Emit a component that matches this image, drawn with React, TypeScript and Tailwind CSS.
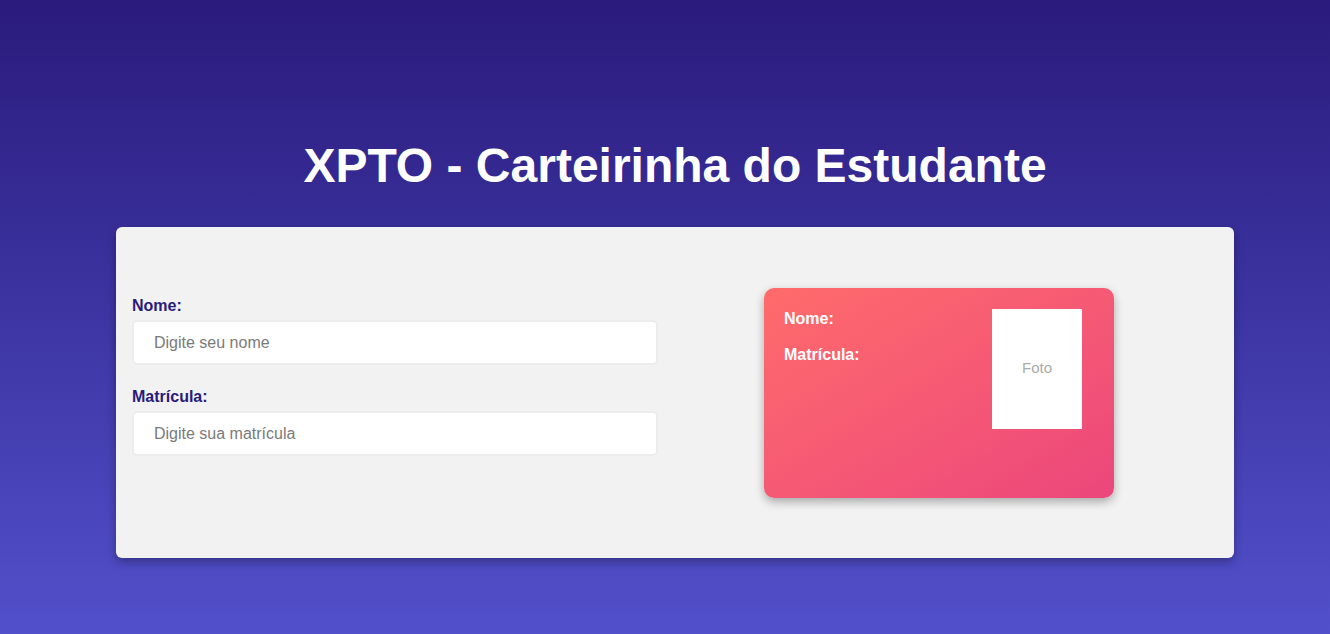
export default function App() {
  return (
    <div
      className="min-h-[634px] w-full bg-linear-to-b from-[#2a1a7c] to-[#5250cb] flex flex-col"
      style={{ fontFamily: '"Liberation Sans", Arial, sans-serif' }}
    >
      <h1 className="pt-[138px] pl-[20px] mb-[34px] text-center text-white font-bold text-[48px] leading-[55px]">
        XPTO - Carteirinha do Estudante
      </h1>
      <div className="ml-[116px] w-[1118px] h-[331px] bg-[#f2f2f2] rounded-[6px] shadow-[0_4px_10px_rgba(0,0,0,0.3)] flex items-center">
        <div className="ml-[16px] w-[526px] mb-[34px] flex flex-col">
          <label className="pt-[2px] text-[16px] leading-[18px] font-bold text-[#2a1a7a] mb-[5px]">Nome:</label>
          <input
            className="h-[45px] w-full bg-white border-2 border-[#ececec] rounded-[5px] pl-[20px] text-[16px] text-[#333] placeholder:text-[#7a7a7a] outline-none"
            placeholder="Digite seu nome"
          />
          <label className="mt-[23px] text-[16px] leading-[18px] font-bold text-[#2a1a7a] mb-[5px]">Matrícula:</label>
          <input
            className="h-[45px] w-full bg-white border-2 border-[#ececec] rounded-[5px] pl-[20px] text-[16px] text-[#333] placeholder:text-[#7a7a7a] outline-none"
            placeholder="Digite sua matrícula"
          />
        </div>
        <div className="ml-[106px] w-[350px] h-[210px] rounded-[10px] bg-linear-to-br from-[#ff6b6b] to-[#ec467b] shadow-[0_4px_10px_rgba(0,0,0,0.3)] flex justify-between pl-[20px] pr-[32px] pt-[20px]">
          <div className="pt-[2px] flex flex-col gap-[18px] text-white font-bold text-[16px] leading-[18px]">
            <span>Nome:</span>
            <span>Matrícula:</span>
          </div>
          <div className="mt-[1px] w-[90px] h-[120px] bg-white flex items-center justify-center text-[#aaa] text-[15px]">
            Foto
          </div>
        </div>
      </div>
    </div>
  );
}
